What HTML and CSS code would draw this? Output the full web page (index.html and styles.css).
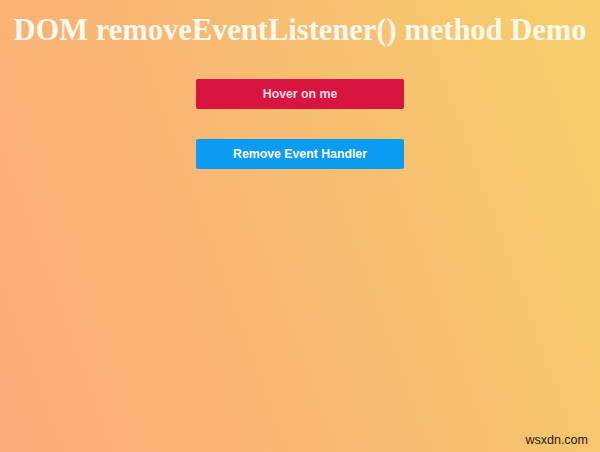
FILE: index.html
```html
<!DOCTYPE html>
<html>
<head>
<meta charset="utf-8">
<link rel="stylesheet" href="styles.css">
</head>
<body>
<div class="page">
  <h1 class="title">DOM removeEventListener() method Demo</h1>
  <div class="buttons">
    <button class="btn btn-hover">Hover on me</button>
    <button class="btn btn-remove">Remove Event Handler</button>
  </div>
  <div class="watermark">wsxdn.com</div>
</div>
</body>
</html>
```
FILE: styles.css
```css
html, body {
  margin: 0;
  padding: 0;
  height: 100%;
}
.page {
  position: relative;
  height: 452px;
  background: linear-gradient(70deg, #fbaa78 0%, #f8bb72 50%, #f6cf6b 100%);
  overflow: hidden;
}
.title {
  margin: 0;
  padding-top: 14px;
  font-family: "Liberation Serif", "Times New Roman", serif;
  font-weight: bold;
  font-size: 30.5px;
  line-height: 32px;
  white-space: nowrap;
  color: #fff8ec;
  text-align: center;
}
.buttons {
  display: flex;
  flex-direction: column;
  align-items: center;
  gap: 30px;
  margin-top: 33px;
}
.btn {
  width: 208px;
  height: 30px;
  border: none;
  border-radius: 2px;
  font-family: "Liberation Sans", Arial, sans-serif;
  font-weight: bold;
  font-size: 12.3px;
  color: #fff;
  padding: 0;
}
.btn-hover {
  background: #da1440;
  color: #f9dfe4;
}
.btn-remove {
  background: #0a9bf2;
}
.watermark {
  position: absolute;
  right: 12px;
  bottom: 5px;
  font-family: "Liberation Sans", Arial, sans-serif;
  font-size: 12.5px;
  color: #222;
}
```
